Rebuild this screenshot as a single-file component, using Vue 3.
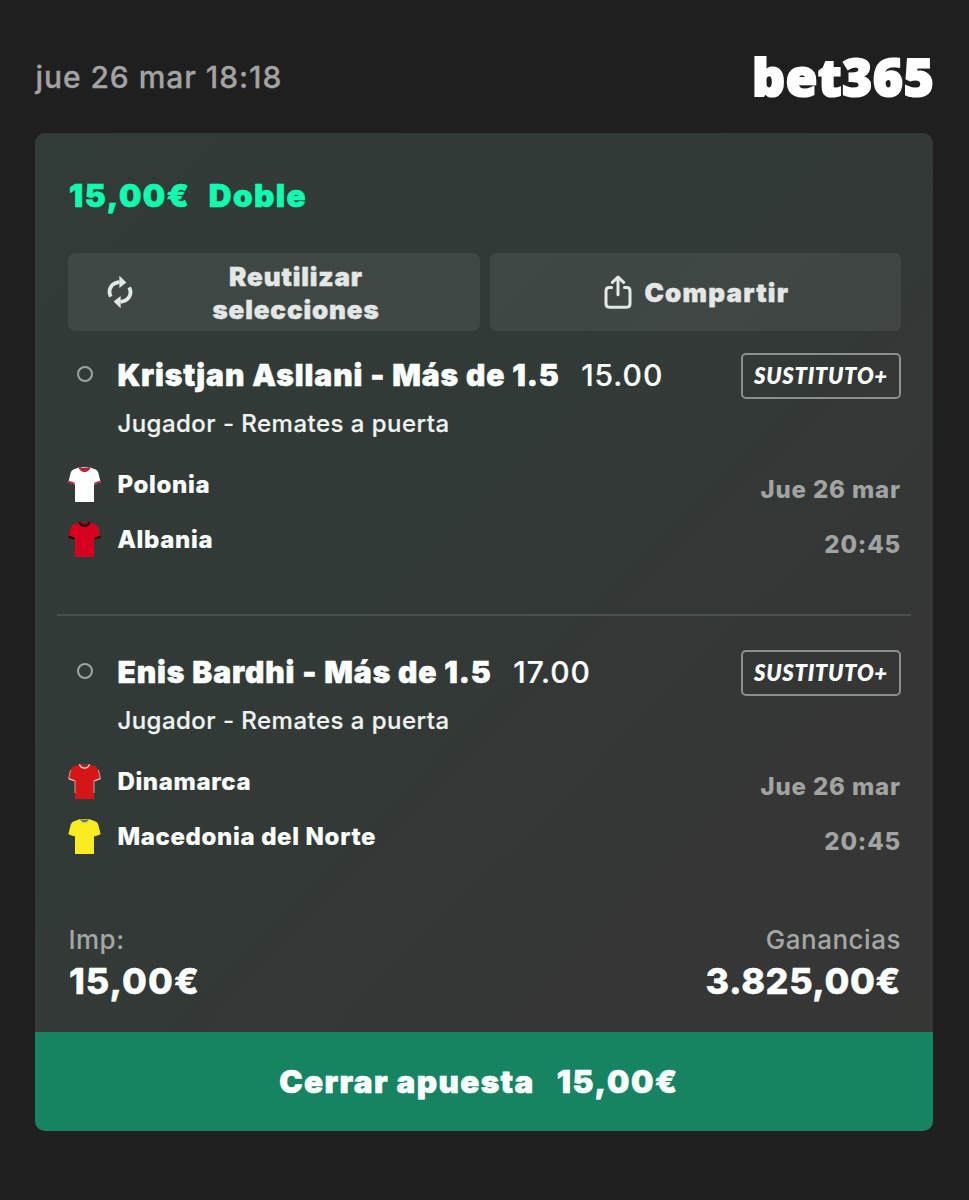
<template>
  <div class="screen">
    <header class="top">
      <span class="date">jue 26 mar 18:18</span>
      <span class="logo">bet365</span>
    </header>

    <div class="card">
      <div class="card-body">
        <div class="bet-title">
          <span class="bet-stake">15,00<i class="euro">€</i></span>
          <span class="bet-type">Doble</span>
        </div>

        <div class="actions">
          <button class="btn">
            <svg class="icon-reuse" viewBox="0 0 26 34">
              <g fill="none" stroke="#e3e7e5" stroke-width="3.8">
                <path d="M3.8 21.6C0.2 14.4 4.6 7.8 12.6 7.2" />
                <path d="M22.2 12.4C25.8 19.6 21.4 26.2 13.4 26.8" />
              </g>
              <path d="M12.4 0.8L19.4 7.4L12.4 13Z" fill="#e3e7e5" />
              <path d="M13.6 33.2L6.6 26.6L13.6 21Z" fill="#e3e7e5" />
            </svg>
            <span class="reuse-label">Reutilizar selecciones</span>
          </button>
          <button class="btn share">
            <svg class="icon-share" viewBox="0 0 28 34">
              <g fill="none" stroke="#e3e7e5" stroke-width="3" stroke-linecap="round" stroke-linejoin="round">
                <path d="M7.6 12.4H5.4Q2 12.4 2 15.8V28.8Q2 32.2 5.4 32.2H22.6Q26 32.2 26 28.8V15.8Q26 12.4 22.6 12.4H20.4" />
                <path d="M14 19.8V2.4M8.4 7.4L14 2L19.6 7.4" />
              </g>
            </svg>
            <span>Compartir</span>
          </button>
        </div>

        <section v-for="sel in selections" :key="sel.name" class="selection">
          <div class="sel-head">
            <span class="dot"></span>
            <span class="sel-name">{{ sel.name }}</span>
            <span class="odds">{{ sel.odds }}</span>
            <span class="badge">SUSTITUTO+</span>
          </div>
          <div class="market">Jugador - Remates a puerta</div>
          <div class="match">
            <div>
              <div v-for="team in sel.teams" :key="team.name" class="team">
                <svg class="shirt" viewBox="0 0 33 37">
                  <path
                    d="M11.5 1.2L5.4 3.4Q3.4 4.3 2.6 7L0.4 16.2L6.4 18.4L7 17.4V36H26V17.4L26.6 18.4L32.6 16.2L30.4 7Q29.6 4.3 27.6 3.4L21.5 1.2Z"
                    :fill="team.color"
                  />
                  <path d="M0.6 15.6L6.5 17.8M32.4 15.6L26.5 17.8" fill="none" :stroke="team.trim" :stroke-width="team.cuff" />
                  <path
                    v-if="team.seams"
                    d="M2.6 7L0.6 15.4M30.4 7L32.4 15.4M7 17.4V30M26 17.4V30"
                    fill="none"
                    :stroke="team.trim"
                    stroke-width="0.7"
                  />
                  <path d="M11.6 1.2Q16.5 2.6 21.4 1.2Q16.5 8 11.6 1.2Z" :fill="team.inner" />
                  <path d="M11.4 1.2Q12.8 5 16.5 5.2Q20.2 5 21.6 1.2" fill="none" :stroke="team.trim" :stroke-width="team.collar" />
                </svg>
                <span>{{ team.name }}</span>
              </div>
            </div>
            <div class="when">
              <div>Jue 26 mar</div>
              <div class="time">20:45</div>
            </div>
          </div>
        </section>

        <div class="totals">
          <div>
            <div class="total-label">Imp:</div>
            <div class="total-value">15,00<i class="euro">€</i></div>
          </div>
          <div class="right">
            <div class="total-label">Ganancias</div>
            <div class="total-value payout">3.825,00<i class="euro">€</i></div>
          </div>
        </div>
      </div>

      <button class="cashout">
        <span class="cashout-label">Cerrar apuesta</span>
        <span class="cashout-value">15,00<i class="euro">€</i></span>
      </button>
    </div>
  </div>
</template>

<script setup>
const selections = [
  {
    name: 'Kristjan Asllani - Más de 1.5',
    odds: '15.00',
    teams: [
      { name: 'Polonia', color: '#fefefe', trim: '#c81d3c', inner: '#8e2438', cuff: 2, collar: 2 },
      { name: 'Albania', color: '#d5001f', trim: '#26070b', inner: '#7c0d1b', cuff: 2.2, collar: 2.2 },
    ],
  },
  {
    name: 'Enis Bardhi - Más de 1.5',
    odds: '17.00',
    teams: [
      { name: 'Dinamarca', color: '#d41716', trim: '#e6d5cc', inner: '#6d3b37', cuff: 1.2, collar: 1.2, seams: true },
      { name: 'Macedonia del Norte', color: '#fbec21', trim: '#d9d48e', inner: '#77754c', cuff: 0.6, collar: 0.9 },
    ],
  },
]
</script>

<style>
body { margin:0; background:#1f1f1f; }
</style>

<style scoped>
.screen { box-sizing:border-box; width:969px; height:1200px; padding:0 35.6px 0 35.4px; background:#1f1f1f; color:#fbfffd; font-family:Inter, "Liberation Sans", sans-serif; overflow:hidden; }
.top { display:flex; justify-content:space-between; align-items:center; height:133px; padding-top:20px; box-sizing:border-box; }
.date { font-size:30px; line-height:36px; font-weight:500; color:#a3a3a3; letter-spacing:.95px; -webkit-text-stroke:.3px; }
.logo { font-family:"Noto Sans", "Open Sans", sans-serif; font-weight:900; font-size:51px; line-height:60px; letter-spacing:.8px; margin:-1px -1px 0 0; color:#fff; -webkit-text-stroke:2.2px #fff; }

.card { height:998px; border-radius:10px; overflow:hidden; background:linear-gradient(135deg, #313b37 0%, #323a37 40%, #353635 75%, #363635 100%); display:flex; flex-direction:column; }
.card-body { flex:1; padding:0 32.5px 0 33px; }
.bet-title { display:flex; gap:18.5px; height:120px; box-sizing:border-box; padding:44px 0 0 .7px; font-size:31.5px; line-height:38px; font-weight:900; color:#0ffdb0; letter-spacing:1.5px; -webkit-text-stroke:.6px; }
.bet-type { letter-spacing:1.4px; }
.euro { font-style:normal; }

.actions { display:grid; grid-template-columns:1fr 1fr; gap:10px; }
.btn { height:78px; border:0; border-radius:7px; padding:0; background:rgba(255,255,255,.065); color:#e3e7e5; font:900 26px/33px Inter, sans-serif; letter-spacing:1px; display:flex; align-items:center; -webkit-text-stroke:.4px; }
.reuse-label { flex:1; padding:1px 83px 0 62px; text-align:center; letter-spacing:.85px; }
.icon-reuse { width:26px; height:34px; margin-left:39px; flex:none; }
.share { justify-content:center; gap:12px; padding-left:3px; letter-spacing:1.2px; }
.icon-share { width:28px; height:34px; }

.selection { height:283px; box-sizing:border-box; padding-top:22px; }
.selection + .selection { position:relative; height:297px; padding-top:36px; }
.selection + .selection::before { content:""; position:absolute; left:-11px; right:-10px; top:0; height:2px; background:#4a504d; }
.sel-head { display:flex; align-items:center; height:46px; }
.dot { flex:none; width:16px; height:16px; box-sizing:border-box; border:2.5px solid #9fa4a2; border-radius:50%; margin:0 24px 4px 9px; }
.sel-name { font-size:30px; font-weight:900; line-height:44px; white-space:nowrap; letter-spacing:.9px; padding-bottom:2px; -webkit-text-stroke:.5px; }
.odds { font-size:30px; line-height:44px; font-weight:500; margin-left:21.5px; letter-spacing:.95px; padding-bottom:2px; -webkit-text-stroke:.2px; }
.badge { margin-left:auto; box-sizing:border-box; width:160px; height:46px; border:2px solid #8b908e; border-radius:5px; text-align:center; font:italic 800 22px/42px Lato, sans-serif; letter-spacing:.7px; }
.market { margin:9px 0 0 49px; font-size:24px; line-height:32px; font-weight:500; letter-spacing:.47px; color:#eef3f1; -webkit-text-stroke:.2px; }
.match { display:flex; justify-content:space-between; margin-top:16px; }
.team { display:flex; align-items:center; gap:16px; height:55px; padding-top:1px; box-sizing:border-box; font-size:24px; font-weight:800; letter-spacing:.67px; -webkit-text-stroke:.2px; }
.shirt { width:33px; height:37px; }
.when { padding-top:6px; text-align:right; font-size:24px; line-height:55px; font-weight:800; letter-spacing:.85px; color:#a2a4a3; }
.time { letter-spacing:.8px; }

.totals { display:flex; justify-content:space-between; padding-top:12px; }
.right { text-align:right; }
.total-label { font-size:26px; line-height:33px; font-weight:500; color:#a5a7a6; letter-spacing:.5px; }
.total-value { font-size:36px; line-height:51px; font-weight:800; letter-spacing:1px; padding-left:.5px; -webkit-text-stroke:.4px; }
.payout { letter-spacing:.55px; }

.cashout { height:99px; border:0; padding:0 11px 0 0; background:#168362; color:#fbfffd; font:900 31.5px/38px Inter, sans-serif; letter-spacing:1.35px; display:flex; align-items:center; justify-content:center; gap:22px; -webkit-text-stroke:.6px; }
.cashout-value { letter-spacing:1.6px; }
</style>
